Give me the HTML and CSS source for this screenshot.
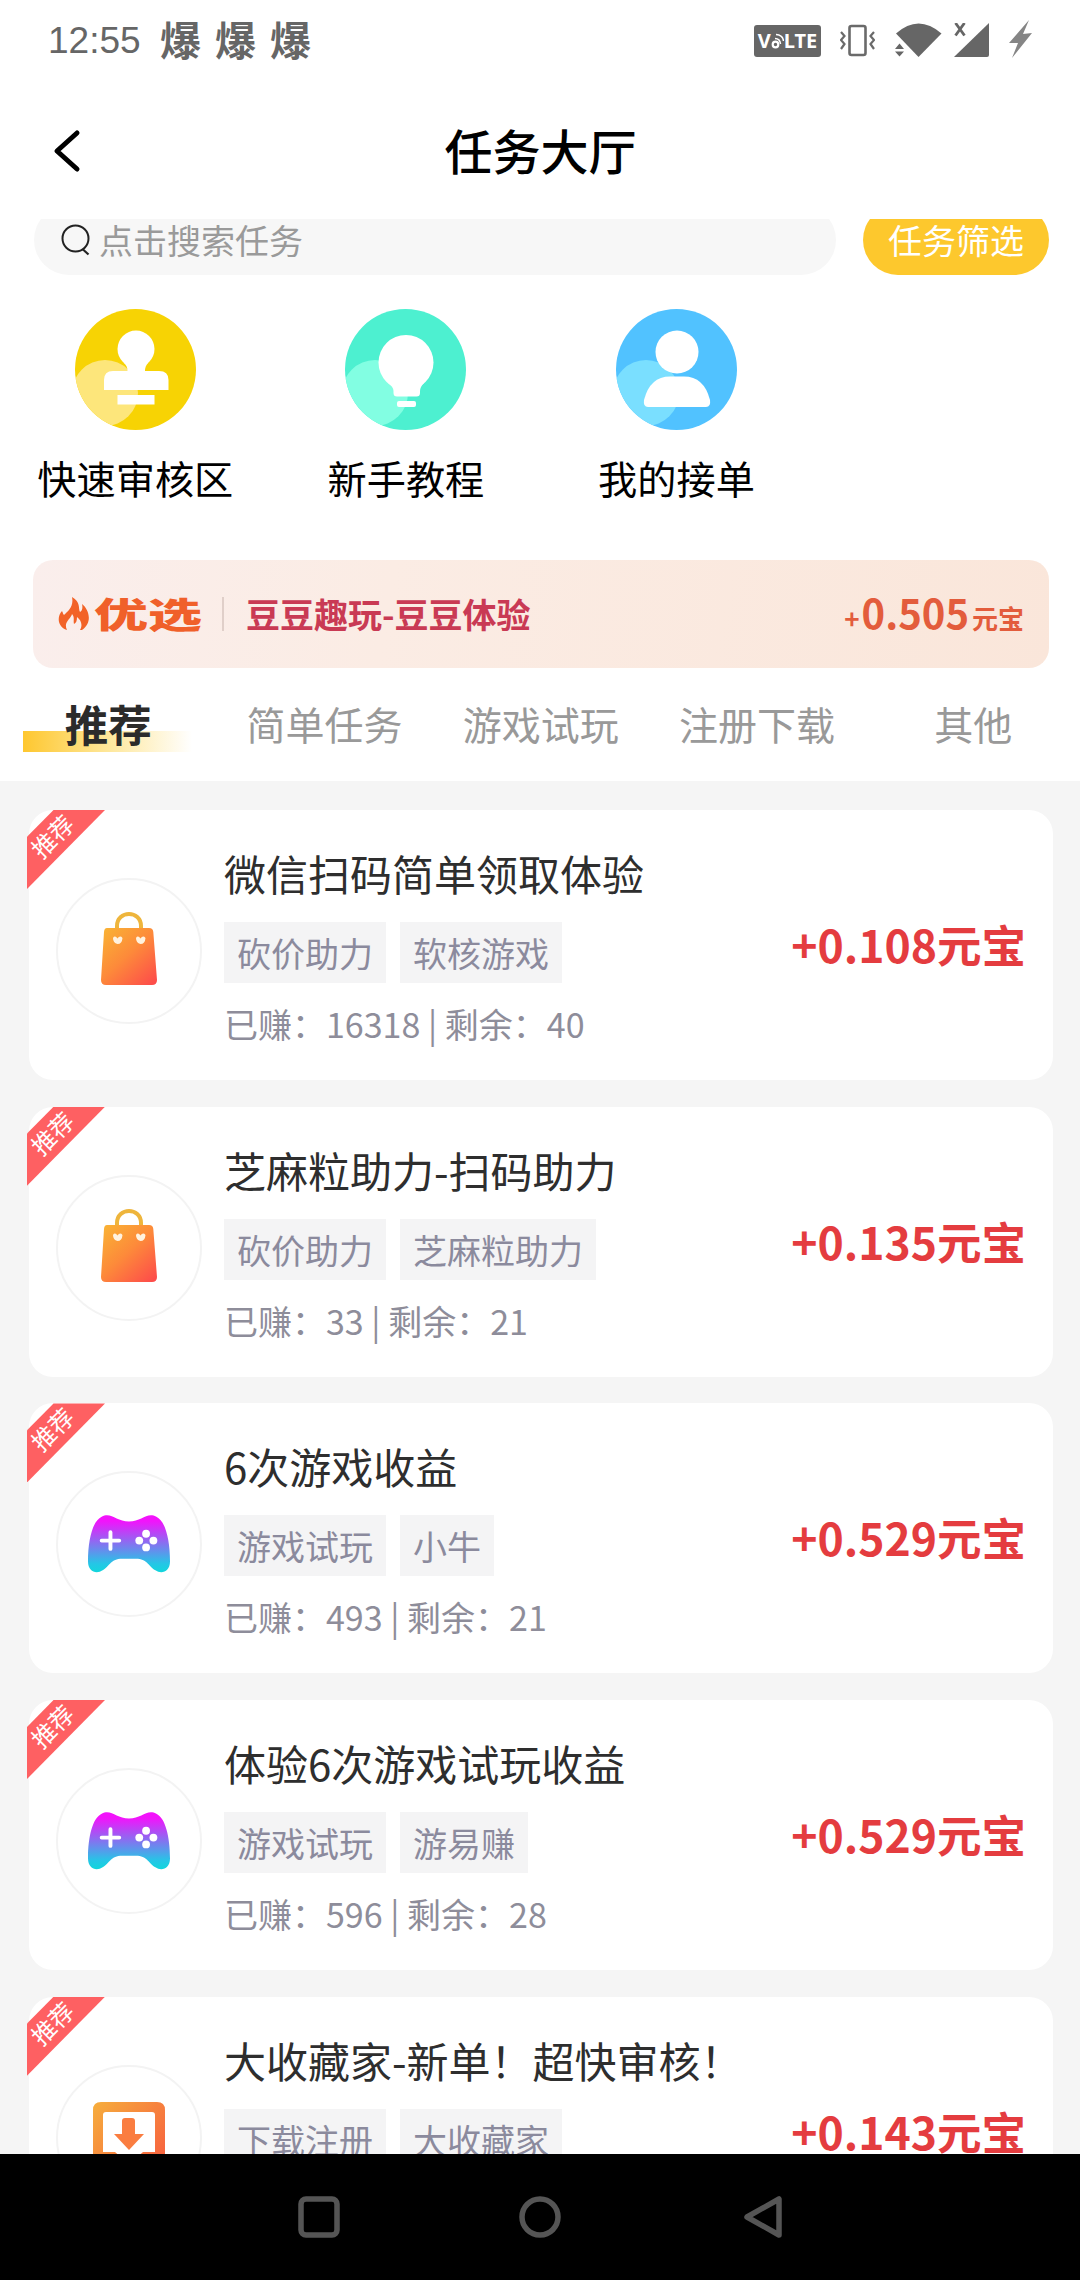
FILE: index.html
```html
<!DOCTYPE html>
<html lang="zh-CN">
<head>
<meta charset="utf-8">
<title>任务大厅</title>
<link rel="stylesheet" href="styles.css">
</head>
<body>
<svg class="defs" aria-hidden="true">
  <defs>
    <linearGradient id="bag-fill" x1="0" y1="0" x2="0.9" y2="1">
      <stop offset="0" stop-color="#f9b534"/><stop offset="0.5" stop-color="#fd8a3a"/><stop offset="1" stop-color="#fd4d4a"/>
    </linearGradient>
    <linearGradient id="pad-fill" x1="0" y1="0" x2="0" y2="1">
      <stop offset="0.1" stop-color="#f213fb"/><stop offset="0.85" stop-color="#25c6e6"/><stop offset="1" stop-color="#12d6dc"/>
    </linearGradient>
    <linearGradient id="down-fill" x1="0" y1="0" x2="1" y2="0.8">
      <stop offset="0" stop-color="#f6ae3c"/><stop offset="1" stop-color="#f7613f"/>
    </linearGradient>
    <clipPath id="disc"><circle cx="60.5" cy="60.5" r="60.5"/></clipPath>
    <symbol id="bag" viewBox="0 0 56 74">
      <path d="M16 17V14C16 -2 40 -2 40 14V17" fill="none" stroke="#eeb53c" stroke-width="4"/>
      <path d="M6 16H48Q52 16 52.300 20L56 68Q56 73 51 73H5Q0 73 0 68L3 20Q3.300 16 6 16Z" fill="url(#bag-fill)"/>
      <path d="M12 26Q14 23 16.500 26.500Q19 23 21.500 26Q21 32 16.500 32Q12 31 12 26ZM35 26Q37 23 39.500 26.500Q42 23 44.500 26Q44 32 39.500 32Q35 31 35 26Z" fill="#fff2df"/>
    </symbol>
    <symbol id="pad" viewBox="0 0 84 60">
      <path d="M14 2C24 -3 29 7 42 7S60 -3 70 2C79 6 84 25 84 48C84 59 75 61 69 57C61 52 61 45 49 45H35C23 45 23 52 15 57C9 61 0 59 0 48C0 25 5 6 14 2Z" fill="url(#pad-fill)"/>
      <path d="M23 18V35M14 26.500H32" stroke="#fff" stroke-width="4" stroke-linecap="round"/>
      <g fill="#fff"><circle cx="59.500" cy="19.500" r="4"/><circle cx="59.500" cy="33.500" r="4"/><circle cx="52.500" cy="26.500" r="4"/><circle cx="67" cy="26.500" r="4"/></g>
    </symbol>
    <symbol id="down" viewBox="0 0 72 72">
      <path d="M8 0H64Q72 0 72 8V64Q72 72 64 72H8Q0 72 0 64V8Q0 0 8 0ZM13 10Q10 10 10 13V50H22L36 62L50 50H62V13Q62 10 59 10Z" fill="url(#down-fill)" fill-rule="evenodd"/>
      <path d="M32 16H39Q42 16 42 19V32H51L36 48L21 32H29V19Q29 16 32 16Z" fill="#fa7d40"/>
    </symbol>
  </defs>
</svg>
<div class="screen">
  <header class="status">
    <div class="status-left"><span class="clock">12:55</span><span class="alerts">爆爆爆</span></div>
    <div class="status-right">
      <span class="volte">V<svg width="13" height="16" viewBox="0 0 13 16"><circle cx="4.500" cy="11.500" r="2.800" fill="none" stroke="#fff" stroke-width="2.200"/><path d="M4 5.500Q9 5.500 9.500 11M5 1.500Q12 2 12.500 8" fill="none" stroke="#fff" stroke-width="1.500"/></svg>LTE</span>
      <svg class="vibrate" width="35" height="34" viewBox="0 0 35 34"><rect x="9.500" y="2" width="16" height="29" rx="2" fill="none" stroke="#6a6a6a" stroke-width="2.600"/><path d="M1 8L4.500 12L1 16L4.500 20L1 25M34 8L30.500 12L34 16L30.500 20L34 25" fill="none" stroke="#6a6a6a" stroke-width="2.200"/></svg>
      <svg class="wifi" width="47" height="34" viewBox="0 0 47 34"><path d="M1 10.500Q23.500 -9.500 46.500 10.500L23.500 34Z" fill="#666"/><path d="M0 26L4.500 20.500L9 26ZM0 28.500L4.500 33.500L9 28.500Z" fill="#666"/></svg>
      <svg class="signal" width="35" height="34" viewBox="0 0 35 34"><path d="M35 0V32Q35 34 33 34H0Z" fill="#666"/><path d="M1.500 0L10.500 12.500M10.500 0L1.500 12.500" stroke="#666" stroke-width="2.800"/></svg>
      <svg class="bolt" width="24" height="38" viewBox="0 0 24 38"><path d="M20 0L0 23L9 23L3 38L23 13L14 14Z" fill="#858585"/></svg>
    </div>
  </header>
  <div class="titlebar">
    <svg class="back" width="28" height="44" viewBox="0 0 28 44"><path d="M24 4L4 22L24 40" fill="none" stroke="#000" stroke-width="5" stroke-linecap="round" stroke-linejoin="round"/></svg>
    <h1>任务大厅</h1>
  </div>
  <main class="content">
    <div class="search-clip"><div class="search-row">
      <div class="search"><svg width="30" height="32" viewBox="0 0 30 32"><circle cx="14.500" cy="14.500" r="13" fill="none" stroke="#222" stroke-width="2"/><path d="M21.500 25L27.500 30.500" stroke="#222" stroke-width="2.200"/></svg><span>点击搜索任务</span></div>
      <div class="filter">任务筛选</div>
    </div></div>
    <nav class="shortcuts">
      <div class="shortcut"><svg width="121" height="121" viewBox="0 0 121 121"><g clip-path="url(#disc)"><rect width="121" height="121" fill="#f7d304"/><circle cx="30" cy="84" r="33" fill="#fde67b"/></g><g fill="#fff"><circle cx="61" cy="40" r="18.500"/><path d="M49 54H73Q70 57 70 62H84Q93.500 62 93.500 71V81H29V71Q29 62 38 62H52.500Q52.500 57 49 54ZM42.500 86H79.500V95.500H42.500Z"/></g></svg><span>快速审核区</span></div>
      <div class="shortcut"><svg width="121" height="121" viewBox="0 0 121 121"><g clip-path="url(#disc)"><rect width="121" height="121" fill="#4df0d0"/><circle cx="30" cy="84" r="33" fill="#82fee2"/></g><g fill="#fff"><circle cx="61" cy="53.500" r="27.500"/><path d="M43 74H79Q75 78 75 82V84Q75 87.500 71.500 87.500H52Q48.500 87.500 48.500 84V82Q48.500 78 43 74Z"/><rect x="52" y="92" width="19" height="6" rx="2"/></g></svg><span>新手教程</span></div>
      <div class="shortcut"><svg width="121" height="121" viewBox="0 0 121 121"><g clip-path="url(#disc)"><rect width="121" height="121" fill="#51c2ff"/><circle cx="30" cy="84" r="33" fill="#7adfff"/></g><circle cx="61" cy="43" r="21.500" fill="#fff"/><path d="M54 67.500H68Q88 67.500 94 91Q95 98 90 98H32Q27 98 28 91Q34 67.500 54 67.500Z" fill="#fff"/></svg><span>我的接单</span></div>
    </nav>
    <section class="featured">
      <svg class="flame" width="32" height="34" viewBox="0 0 32 34"><path d="M14 0C23 5 20 11 22 15C24 14 25 11 24 7C31 12 35 26 24 33H22C25 28 23 23 19 20C19 24 18 26 16 27C15 24 17 20 14 17C13 22 5 25 9 33C-1 30 -1 19 4 14C5 16 5 17 6 18C10 14 16 10 14 0Z" fill="#f26227"/></svg>
      <div class="pick"><span>优选</span></div>
      <i class="divider"></i>
      <strong class="featured-name">豆豆趣玩-豆豆体验</strong>
      <div class="featured-reward">+<b>0.505</b>元宝</div>
    </section>
    <nav class="tabs"><span class="tab active">推荐</span><span class="tab">简单任务</span><span class="tab">游戏试玩</span><span class="tab">注册下载</span><span class="tab">其他</span></nav>
    <section class="tasks">
      <article class="task">
        <div class="ribbon"><span>推荐</span></div>
        <div class="avatar"><svg class="bag" width="56" height="74"><use href="#bag"/></svg></div>
        <div class="info"><h2>微信扫码简单领取体验</h2><div class="tags"><span>砍价助力</span><span>软核游戏</span></div><p>已赚：16318 | 剩余：40</p></div>
        <div class="reward">+0.108元宝</div>
      </article>
      <article class="task">
        <div class="ribbon"><span>推荐</span></div>
        <div class="avatar"><svg class="bag" width="56" height="74"><use href="#bag"/></svg></div>
        <div class="info"><h2>芝麻粒助力-扫码助力</h2><div class="tags"><span>砍价助力</span><span>芝麻粒助力</span></div><p>已赚：33 | 剩余：21</p></div>
        <div class="reward">+0.135元宝</div>
      </article>
      <article class="task">
        <div class="ribbon"><span>推荐</span></div>
        <div class="avatar"><svg width="82" height="60"><use href="#pad"/></svg></div>
        <div class="info"><h2>6次游戏收益</h2><div class="tags"><span>游戏试玩</span><span>小牛</span></div><p>已赚：493 | 剩余：21</p></div>
        <div class="reward">+0.529元宝</div>
      </article>
      <article class="task">
        <div class="ribbon"><span>推荐</span></div>
        <div class="avatar"><svg width="82" height="60"><use href="#pad"/></svg></div>
        <div class="info"><h2>体验6次游戏试玩收益</h2><div class="tags"><span>游戏试玩</span><span>游易赚</span></div><p>已赚：596 | 剩余：28</p></div>
        <div class="reward">+0.529元宝</div>
      </article>
      <article class="task">
        <div class="ribbon"><span>推荐</span></div>
        <div class="avatar"><svg width="72" height="72"><use href="#down"/></svg></div>
        <div class="info"><h2>大收藏家-新单！超快审核！</h2><div class="tags"><span>下载注册</span><span>大收藏家</span></div></div>
        <div class="reward">+0.143元宝</div>
      </article>
    </section>
  </main>
  <footer class="navbar">
    <svg width="44" height="44" viewBox="0 0 44 44"><rect x="4" y="4" width="36" height="36" rx="5" fill="none" stroke="#555" stroke-width="5.500"/></svg>
    <svg width="44" height="44" viewBox="0 0 44 44"><circle cx="22" cy="22" r="18" fill="none" stroke="#555" stroke-width="5.500"/></svg>
    <svg width="44" height="44" viewBox="0 0 44 44"><path d="M40 4V40L8 22Z" fill="none" stroke="#555" stroke-width="5.500" stroke-linejoin="round"/></svg>
  </footer>
</div>
</body>
</html>
```
FILE: styles.css
```css
* { box-sizing: border-box; }
body {
  margin: 0;
  background: #fff;
  font-family: "Noto Sans CJK SC", sans-serif;
  color: #000;
}
h1, h2, p { margin: 0; font-weight: 400; }
svg { display: block; flex: none; }
.defs { position: absolute; width: 0; height: 0; }
.screen {
  width: 1080px;
  height: 2280px;
  display: flex;
  flex-direction: column;
  overflow: hidden;
}

.status {
  height: 84px;
  flex: none;
  display: flex;
  justify-content: space-between;
  align-items: flex-start;
  padding: 20px 47px 0 48px;
  color: #666;
}
.status-left { display: flex; align-items: center; height: 40px; }
.clock { font: 37px/40px "Liberation Sans", sans-serif; width: 112px; padding-top: 2px; }
.alerts { font-size: 41px; font-weight: 700; line-height: 36px; height: 40px; letter-spacing: 14px; }
.status-right { display: flex; align-items: flex-start; }
.volte {
  display: flex;
  align-items: center;
  justify-content: center;
  width: 67px;
  height: 32px;
  margin: 5px 19px 0 0;
  border-radius: 3px;
  background: #666;
  color: #fff;
  font: 700 20px/32px "Noto Sans", sans-serif;
}
.vibrate { margin: 4px 20px 0 0; }
.wifi { margin: 3px 12px 0 0; }
.signal { margin: 3px 20px 0 0; }

.titlebar {
  height: 135px;
  flex: none;
  display: grid;
  grid-template-columns: 54px 1fr 54px;
  align-items: center;
  padding-bottom: 1px;
}
.back { margin-left: 53px; }
.titlebar h1 { font-size: 48px; font-weight: 500; line-height: 60px; text-align: center; padding: 0 0 5px 1px; }

.content { flex: 1; min-height: 0; overflow: hidden; }
.search-clip { height: 56px; overflow: hidden; display: flex; flex-direction: column; justify-content: flex-end; }
.search-row { height: 70px; flex: none; display: flex; gap: 27px; padding: 0 31px 0 34px; }
.search {
  flex: 1;
  display: flex;
  align-items: center;
  gap: 8px;
  padding: 0 0 1px 27px;
  border-radius: 35px;
  background: #f7f7f7;
  color: #9a9a9a;
  font-size: 34px;
}
.filter {
  width: 186px;
  border-radius: 35px;
  background: #fdc82d;
  color: #fff;
  font-size: 34px;
  line-height: 69px;
  text-align: center;
}

.shortcuts { display: grid; grid-template-columns: repeat(4, 270.600px); padding-top: 34px; height: 285px; }
.shortcut { display: flex; flex-direction: column; align-items: center; font-size: 39.200px; line-height: 58px; gap: 18px; }

.featured {
  height: 108px;
  margin: 0 31px 0 33px;
  padding: 0 25px 0 25px;
  display: flex;
  align-items: center;
  border-radius: 20px;
  background: linear-gradient(100deg, #faeeec, #fbece4 35%, #fae6da);
}
.pick { width: 107px; margin-left: 4px; }
.pick span {
  display: block;
  width: 70px;
  margin-bottom: 3px;
  font-size: 35px;
  font-weight: 900;
  line-height: 50px;
  color: #f0602a;
  transform: scaleX(1.540);
  transform-origin: 0 50%;
}
.divider { width: 2px; height: 34px; margin: 0 22px 0 21px; background: #e0cfc9; }
.featured-name { flex: 1; font-size: 34px; font-weight: 700; color: #c93a54; margin-bottom: 2px; }
.featured-reward { color: #e35c3c; font-size: 26px; font-weight: 700; line-height: 60px; display: flex; align-items: baseline; padding-top: 2px; }
.featured-reward b { font-size: 40px; font-weight: 700; margin: 0 3px 0 2px; }

.tabs { display: grid; grid-template-columns: repeat(5, 216.300px); height: 113px; }
.tab { font-size: 39px; line-height: 111px; text-align: center; color: #999; }
.tab.active {
  color: #2b2b2b;
  font-size: 43.500px;
  font-weight: 700;
  background: linear-gradient(90deg, #fec72f, #fee79a 50%, #fff) 23px 63px / 169px 21px no-repeat;
}

.tasks {
  display: flex;
  flex-direction: column;
  gap: 26.700px;
  padding: 29px 27px 0 29px;
  background: #f5f5f5;
}
.task {
  position: relative;
  height: 270px;
  flex: none;
  display: flex;
  align-items: flex-start;
  padding: 0 27px 0 27px;
  border-radius: 24px;
  background: #fff;
}
.ribbon {
  position: absolute;
  left: -2px;
  top: 0;
  width: 78px;
  height: 79px;
  background: #fe6062;
  clip-path: polygon(34% 0, 100% 0, 0 100%, 0 34%);
}
.ribbon span {
  display: block;
  width: 52px;
  margin: 7px 0 0 -1px;
  font-size: 24px;
  line-height: 38px;
  text-align: center;
  color: #fff;
  transform: rotate(-45deg);
}
.avatar {
  width: 146px;
  height: 146px;
  margin: 68px 22px 0 0;
  display: flex;
  align-items: center;
  justify-content: center;
  border: 2px solid #f3f3f3;
  border-radius: 50%;
}
.bag { margin-bottom: 4px; }
.info { flex: 1; display: flex; flex-direction: column; }
.info h2 { margin-top: 32px; font-size: 42px; line-height: 62px; color: #2e2e2e; white-space: nowrap; }
.tags { display: flex; gap: 14px; margin-top: 18px; }
.tags span {
  height: 61px;
  padding: 1px 13px 0;
  font-size: 34px;
  line-height: 60px;
  color: #8b8a9d;
  background: #f4f4f5;
}
.info p { margin-top: 16px; font-size: 34px; line-height: 50px; color: #8e8d9a; }
.reward { margin-top: 104px; font-size: 44.500px; font-weight: 700; line-height: 60px; color: #e43c3f; }

.navbar {
  height: 126px;
  flex: none;
  display: flex;
  align-items: center;
  justify-content: center;
  gap: 177px;
  background: #000;
}
```
